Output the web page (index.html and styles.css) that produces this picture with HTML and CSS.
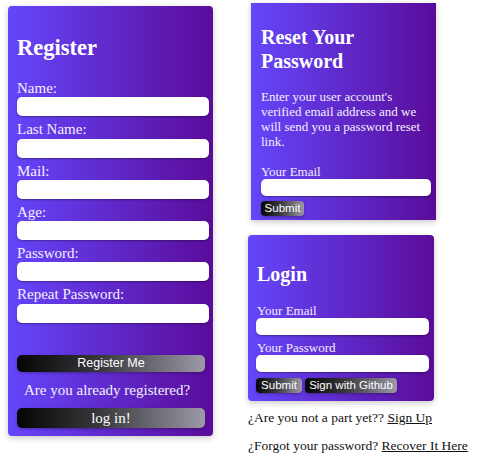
FILE: index.html
```html
<!DOCTYPE html>
<html lang="en">
<head>
<meta charset="utf-8">
<title>Forms</title>
<link rel="stylesheet" href="styles.css">
</head>
<body>
<div class="page">
  <section class="card register">
    <h2 class="title-lg">Register</h2>
    <form class="reg-form">
      <div class="field"><label class="reg-label">Name:</label><input class="reg-input" type="text"></div>
      <div class="field"><label class="reg-label">Last Name:</label><input class="reg-input" type="text"></div>
      <div class="field"><label class="reg-label">Mail:</label><input class="reg-input" type="text"></div>
      <div class="field"><label class="reg-label">Age:</label><input class="reg-input" type="text"></div>
      <div class="field"><label class="reg-label">Password:</label><input class="reg-input" type="password"></div>
      <div class="field"><label class="reg-label">Repeat Password:</label><input class="reg-input" type="password"></div>
      <button class="btn btn-register" type="button">Register Me</button>
      <p class="already">Are you already registered?</p>
      <button class="btn btn-login" type="button">log in!</button>
    </form>
  </section>

  <div class="side">
    <section class="card reset">
      <h2 class="title-sm">Reset Your Password</h2>
      <p class="reset-text">Enter your user account's verified email address and we will send you a password reset link.</p>
      <label class="sm-label first">Your Email</label>
      <input class="sm-input" type="text">
      <div class="btn-row">
        <button class="btn btn-sm btn-submit" type="button">Submit</button>
      </div>
    </section>

    <section class="card login">
      <h2 class="title-sm">Login</h2>
      <label class="sm-label login-first">Your Email</label>
      <input class="sm-input" type="text">
      <label class="sm-label login-second">Your Password</label>
      <input class="sm-input" type="password">
      <div class="btn-row">
        <button class="btn btn-sm btn-submit" type="button">Submit</button>
        <button class="btn btn-sm btn-github" type="button">Sign with Github</button>
      </div>
    </section>

    <p class="note note-first">¿Are you not a part yet?? <a class="note-link" href="#">Sign Up</a></p>
    <p class="note note-second">¿Forgot your password? <a class="note-link" href="#">Recover It Here</a></p>
  </div>
</div>
</body>
</html>
```

FILE: styles.css
```css
* { box-sizing: border-box; }

html, body {
  margin: 0;
  padding: 0;
  background: #ffffff;
}

body {
  font-family: "Liberation Serif", "Times New Roman", serif;
  color: #111;
}

.page {
  display: flex;
  align-items: flex-start;
  gap: 35px;
  padding-left: 8px;
}

.card {
  background: linear-gradient(to right, #6546fb 0%, #5a0c9a 100%);
  color: #ffffff;
  box-shadow: 0 2px 6px rgba(0, 0, 0, 0.22);
}

/* Register */
.register {
  width: 205px;
  margin-top: 6px;
  padding: 10px 4px 8px 9px;
  border-radius: 4px;
}

.title-lg {
  margin: 19px 0 20px;
  font-size: 22.5px;
  line-height: 25px;
  font-weight: bold;
}

.reg-form {
  display: flex;
  flex-direction: column;
  margin: 0;
}

.field {
  display: flex;
  flex-direction: column;
  margin-bottom: 5px;
}

.reg-label {
  font-size: 15px;
  line-height: 17.25px;
  color: #f4f0ff;
}

.reg-input {
  width: 192px;
  height: 19px;
  border: none;
  border-radius: 5px;
  background: #ffffff;
  box-shadow: 0 1px 2px rgba(0, 0, 0, 0.35);
  padding: 0 4px;
  margin: 0;
  outline: none;
}

.btn {
  border: none;
  margin: 0;
  padding: 0;
  color: #ffffff;
  background: linear-gradient(to right, #050505 0%, #3a3a3e 45%, #9d99a6 100%);
  box-shadow: 0 1px 3px rgba(0, 0, 0, 0.3);
  cursor: pointer;
}

.btn-register {
  width: 188px;
  height: 17px;
  margin-top: 27px;
  border-radius: 5px;
  font-family: "Liberation Sans", Arial, sans-serif;
  font-size: 12.5px;
  line-height: 17px;
}

.already {
  margin: 10px 0 0 7px;
  font-size: 15px;
  line-height: 17px;
  color: #f4f0ff;
}

.btn-login {
  width: 188px;
  height: 20px;
  margin-top: 9px;
  border-radius: 5px;
  font-family: "Liberation Serif", "Times New Roman", serif;
  font-size: 15px;
  line-height: 20px;
}

/* Right column */
.side {
  display: flex;
  flex-direction: column;
  width: 230px;
}

.reset {
  width: 185px;
  margin: 3px 0 0 3px;
  padding: 22px 5px 4px 10px;
  display: flex;
  flex-direction: column;
}

.title-sm {
  margin: 0;
  font-size: 20px;
  line-height: 24px;
  font-weight: bold;
}

.reset-text {
  margin: 16px 0 0;
  font-size: 13px;
  line-height: 15px;
  color: #f4f0ff;
}

.sm-label {
  display: block;
  font-size: 13px;
  line-height: 15px;
  color: #f4f0ff;
}

.sm-label.first { margin-top: 15px; }
.sm-label.login-first { margin-top: 17px; }
.sm-label.login-second { margin-top: 5px; }

.sm-input {
  display: block;
  width: 100%;
  height: 17px;
  border: none;
  border-radius: 5px;
  background: #ffffff;
  box-shadow: 0 1px 2px rgba(0, 0, 0, 0.35);
  padding: 0 4px;
  margin: 0;
  outline: none;
}

.btn-row {
  display: flex;
  gap: 3px;
}

.reset .btn-row { margin-top: 5px; }
.login .btn-row { margin-top: 6px; }

.btn-sm {
  height: 15px;
  border-radius: 4px;
  font-family: "Liberation Sans", Arial, sans-serif;
  font-size: 11.5px;
  line-height: 15px;
}

.reset .btn-submit { width: 43px; }
.login .btn-submit { width: 46px; }
.btn-github { width: 92px; }

.login {
  width: 186px;
  margin-top: 15px;
  padding: 27px 5px 8px 8px;
  border-radius: 4px;
  display: flex;
  flex-direction: column;
}

.login .title-sm { padding-left: 1px; }
.login .sm-label { padding-left: 1px; }

.note {
  margin: 0;
  font-size: 13.5px;
  line-height: 15.5px;
  color: #111;
  white-space: nowrap;
}

.note-first { margin-top: 9px; }
.note-second { margin-top: 12.5px; }

.note-link {
  color: #111;
  text-decoration: underline;
}
```
